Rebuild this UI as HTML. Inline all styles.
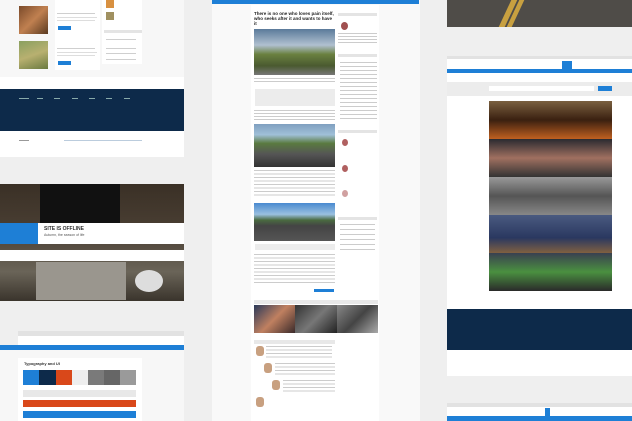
<!DOCTYPE html>
<html><head><meta charset="utf-8"><style>
*{margin:0;padding:0;box-sizing:border-box}
body{width:632px;height:421px;background:#efefef;position:relative;overflow:hidden;font-family:"Liberation Sans",sans-serif}
.a{position:absolute}
.w{background:#fff}
.ln{position:absolute;height:1px;background:#cfcfcf}
</style></head><body>
<!-- LEFT COLUMN -->
<div class="a" style="left:0;top:0;width:184px;height:157px;background:#f7f7f7"></div>
<div class="a w" style="left:55px;top:0;width:45px;height:70px"></div>
<div class="a w" style="left:102px;top:0;width:40px;height:64px"></div>
<div class="a" style="left:19px;top:6px;width:29px;height:28px;background:linear-gradient(135deg,#7a4a2a,#c08050 50%,#5a3a20)"></div>
<div class="a" style="left:19px;top:41px;width:29px;height:28px;background:linear-gradient(160deg,#8aa060,#b8b070 50%,#6a7a40)"></div>
<div class="ln" style="left:57px;top:13px;width:38px"></div><div class="ln" style="left:57px;top:17px;width:40px;background:#ddd"></div><div class="ln" style="left:57px;top:20px;width:38px;background:#ddd"></div>
<div class="a" style="left:58px;top:26px;width:13px;height:4px;background:#1e7fd6"></div>
<div class="ln" style="left:57px;top:48px;width:38px"></div><div class="ln" style="left:57px;top:52px;width:40px;background:#ddd"></div><div class="ln" style="left:57px;top:55px;width:38px;background:#ddd"></div>
<div class="a" style="left:58px;top:61px;width:13px;height:4px;background:#1e7fd6"></div>
<div class="a" style="left:106px;top:0;width:8px;height:8px;background:#d89040"></div>
<div class="a" style="left:106px;top:12px;width:8px;height:8px;background:#a09060"></div>
<div class="a" style="left:104px;top:30px;width:38px;height:3px;background:#e4e4e4"></div>
<div class="ln" style="left:106px;top:39px;width:30px"></div><div class="ln" style="left:106px;top:48px;width:30px"></div><div class="ln" style="left:106px;top:53px;width:30px"></div><div class="ln" style="left:106px;top:59px;width:30px"></div>
<div class="a w" style="left:0;top:77px;width:184px;height:12px"></div>
<div class="a" style="left:0;top:89px;width:184px;height:42px;background:#0d2a4a"></div>
<div class="ln" style="left:19px;top:98px;width:10px;background:#8aa"></div>
<div class="ln" style="left:37px;top:98px;width:6px;background:#8aa"></div><div class="ln" style="left:54px;top:98px;width:6px;background:#8aa"></div><div class="ln" style="left:72px;top:98px;width:6px;background:#8aa"></div><div class="ln" style="left:89px;top:98px;width:6px;background:#8aa"></div><div class="ln" style="left:106px;top:98px;width:6px;background:#8aa"></div><div class="ln" style="left:124px;top:98px;width:6px;background:#8aa"></div>
<div class="a w" style="left:0;top:131px;width:184px;height:26px"></div>
<div class="ln" style="left:19px;top:140px;width:10px;background:#999"></div>
<div class="ln" style="left:64px;top:140px;width:78px;background:#bcd"></div>
<div class="a" style="left:0;top:184px;width:184px;height:117px;background:linear-gradient(180deg,#3a3026 0%,#4a3f33 40%,#6a6458 75%,#3a342c 100%)"></div>
<div class="a" style="left:40px;top:184px;width:80px;height:45px;background:#111"></div>
<div class="a" style="left:36px;top:262px;width:90px;height:38px;background:#9a968e"></div>
<div class="a" style="left:135px;top:270px;width:28px;height:22px;border-radius:50%;background:#ddd"></div>
<div class="a" style="left:0;top:223px;width:38px;height:21px;background:#1e7fd6"></div>
<div class="a w" style="left:38px;top:223px;width:146px;height:21px"></div>
<div class="a" style="left:44px;top:226px;font-size:5px;font-weight:bold;color:#333">SITE IS OFFLINE</div>
<div class="a" style="left:44px;top:233px;font-size:3.5px;color:#555">Autumn, the season of life</div>
<div class="a w" style="left:0;top:250px;width:184px;height:11px"></div>
<div class="a" style="left:18px;top:331px;width:166px;height:5px;background:#e2e2e2"></div>
<div class="a w" style="left:18px;top:336px;width:166px;height:9px"></div>
<div class="a" style="left:0;top:345px;width:184px;height:5px;background:#1e7fd6"></div>
<div class="a" style="left:0;top:350px;width:184px;height:71px;background:#f7f7f7"></div>
<div class="a w" style="left:18px;top:358px;width:124px;height:63px"></div>
<div class="a" style="left:24px;top:361px;font-size:4px;font-weight:bold;color:#333">Typography and UI</div>
<div class="a" style="left:23px;top:370px;width:16px;height:15px;background:#1e7fd6"></div>
<div class="a" style="left:39px;top:370px;width:17px;height:15px;background:#0d2a4a"></div>
<div class="a" style="left:56px;top:370px;width:16px;height:15px;background:#d9481a"></div>
<div class="a" style="left:72px;top:370px;width:16px;height:15px;background:#eee"></div>
<div class="a" style="left:88px;top:370px;width:16px;height:15px;background:#7a7a7a"></div>
<div class="a" style="left:104px;top:370px;width:16px;height:15px;background:#666"></div>
<div class="a" style="left:120px;top:370px;width:16px;height:15px;background:#9a9a9a"></div>
<div class="a" style="left:23px;top:390px;width:113px;height:7px;background:#e8e8e8"></div>
<div class="a" style="left:23px;top:400px;width:113px;height:7px;background:#d9481a"></div>
<div class="a" style="left:23px;top:411px;width:113px;height:7px;background:#1e7fd6"></div>
<!-- MIDDLE -->
<div class="a" style="left:212px;top:0;width:208px;height:421px;background:#f9f9f9"></div>
<div class="a w" style="left:251px;top:5px;width:128px;height:416px"></div>
<div class="a" style="left:212px;top:0;width:207px;height:4px;background:#1e7fd6"></div>
<div class="a" style="left:254px;top:11px;font-size:4.5px;font-weight:bold;color:#222;line-height:5px;width:82px">There is no one who loves pain itself, who seeks after it and wants to have it</div>
<div class="a" style="left:254px;top:29px;width:81px;height:46px;background:linear-gradient(180deg,#5a7a9a,#b0c0d0 35%,#6a8040 55%,#4a5a30 80%,#777)"></div>
<div class="a" style="left:254px;top:78px;width:81px;height:6px;background:repeating-linear-gradient(180deg,#ccc 0 1px,#fff 1px 3px)"></div>
<div class="a" style="left:255px;top:89px;width:80px;height:17px;background:#ececec"></div>
<div class="a" style="left:254px;top:110px;width:81px;height:10px;background:repeating-linear-gradient(180deg,#ccc 0 1px,#fff 1px 3px)"></div>
<div class="a" style="left:254px;top:124px;width:81px;height:43px;background:linear-gradient(180deg,#80a0c0,#a0c0d8 25%,#5a7a40 45%,#555 70%,#333)"></div>
<div class="a" style="left:254px;top:170px;width:81px;height:28px;background:repeating-linear-gradient(180deg,#ccc 0 1px,#fff 1px 3.5px)"></div>
<div class="a" style="left:254px;top:203px;width:81px;height:38px;background:linear-gradient(180deg,#4a8ad0,#9ac0e0 30%,#4a6a40 45%,#444 60%,#555)"></div>
<div class="a" style="left:255px;top:244px;width:80px;height:6px;background:#ececec"></div>
<div class="a" style="left:254px;top:254px;width:81px;height:30px;background:repeating-linear-gradient(180deg,#ccc 0 1px,#fff 1px 3.5px)"></div>
<div class="a" style="left:314px;top:289px;width:20px;height:3px;background:#1e7fd6"></div>
<div class="a" style="left:254px;top:300px;width:124px;height:4px;background:#e8e8e8"></div>
<div class="a" style="left:254px;top:305px;width:41px;height:28px;background:linear-gradient(135deg,#2a3a5a,#c08060 50%,#3a2a2a)"></div>
<div class="a" style="left:295px;top:305px;width:42px;height:28px;background:linear-gradient(135deg,#333,#777 50%,#222)"></div>
<div class="a" style="left:337px;top:305px;width:41px;height:28px;background:linear-gradient(135deg,#888,#444 50%,#aaa)"></div>
<div class="a" style="left:254px;top:340px;width:81px;height:4px;background:#e8e8e8"></div>
<div class="a" style="left:256px;top:346px;width:8px;height:10px;background:#c8a080;border-radius:3px"></div>
<div class="a" style="left:264px;top:363px;width:8px;height:10px;background:#c8a080;border-radius:3px"></div>
<div class="a" style="left:272px;top:380px;width:8px;height:10px;background:#c8a080;border-radius:3px"></div>
<div class="a" style="left:256px;top:397px;width:8px;height:10px;background:#c8a080;border-radius:3px"></div>
<div class="a" style="left:266px;top:346px;width:66px;height:12px;background:repeating-linear-gradient(180deg,#ccc 0 1px,#fff 1px 3.5px)"></div>
<div class="a" style="left:275px;top:363px;width:60px;height:12px;background:repeating-linear-gradient(180deg,#ccc 0 1px,#fff 1px 3.5px)"></div>
<div class="a" style="left:283px;top:380px;width:52px;height:12px;background:repeating-linear-gradient(180deg,#ccc 0 1px,#fff 1px 3.5px)"></div>
<!-- sidebar middle -->
<div class="a" style="left:338px;top:13px;width:39px;height:3px;background:#e4e4e4"></div>
<div class="a" style="left:341px;top:22px;width:7px;height:8px;border-radius:50%;background:#a05050"></div>
<div class="a" style="left:338px;top:33px;width:39px;height:10px;background:repeating-linear-gradient(180deg,#ccc 0 1px,#fff 1px 3px)"></div>
<div class="a" style="left:338px;top:54px;width:39px;height:3px;background:#e4e4e4"></div>
<div class="a" style="left:340px;top:62px;width:37px;height:60px;background:repeating-linear-gradient(180deg,#ccc 0 1px,#fff 1px 4px)"></div>
<div class="a" style="left:338px;top:130px;width:39px;height:3px;background:#e4e4e4"></div>
<div class="a" style="left:342px;top:139px;width:6px;height:7px;border-radius:50%;background:#b06060"></div>
<div class="a" style="left:342px;top:165px;width:6px;height:7px;border-radius:50%;background:#b06060"></div>
<div class="a" style="left:342px;top:190px;width:6px;height:7px;border-radius:50%;background:#d0a0a0"></div>
<div class="a" style="left:338px;top:217px;width:39px;height:3px;background:#e4e4e4"></div>
<div class="a" style="left:340px;top:224px;width:35px;height:30px;background:repeating-linear-gradient(180deg,#ccc 0 1px,#fff 1px 5px)"></div>
<!-- RIGHT -->
<div class="a" style="left:447px;top:0;width:185px;height:27px;background:#4f4c48"></div>
<div class="a" style="left:505px;top:0;width:6px;height:27px;background:#c8a040;transform:skewX(-25deg)"></div>
<div class="a" style="left:513px;top:0;width:5px;height:27px;background:#c8a040;transform:skewX(-25deg)"></div>
<div class="a" style="left:447px;top:56px;width:185px;height:3px;background:#e2e2e2"></div>
<div class="a w" style="left:447px;top:59px;width:185px;height:10px"></div>
<div class="a" style="left:562px;top:61px;width:10px;height:9px;background:#1e7fd6"></div>
<div class="a" style="left:447px;top:69px;width:185px;height:4px;background:#1e7fd6"></div>
<div class="a w" style="left:447px;top:73px;width:185px;height:236px"></div>
<div class="a" style="left:447px;top:82px;width:185px;height:14px;background:#ececec"></div>
<div class="a w" style="left:489px;top:86px;width:105px;height:5px"></div>
<div class="a" style="left:598px;top:86px;width:14px;height:5px;background:#1e7fd6"></div>
<div class="a" style="left:489px;top:101px;width:123px;height:38px;background:linear-gradient(180deg,#7a6040,#3a2010 50%,#c06020)"></div>
<div class="a" style="left:489px;top:139px;width:123px;height:38px;background:linear-gradient(180deg,#2a2a30,#a07060 50%,#333)"></div>
<div class="a" style="left:489px;top:177px;width:123px;height:38px;background:linear-gradient(180deg,#999,#555 50%,#888)"></div>
<div class="a" style="left:489px;top:215px;width:123px;height:38px;background:linear-gradient(180deg,#4a5a80,#2a3860 60%,#806040)"></div>
<div class="a" style="left:489px;top:253px;width:123px;height:38px;background:linear-gradient(180deg,#3a4050,#4a9040 50%,#2a2a2a)"></div>
<div class="a" style="left:447px;top:309px;width:185px;height:41px;background:#0d2a4a"></div>
<div class="a w" style="left:447px;top:350px;width:185px;height:26px"></div>
<div class="a" style="left:447px;top:403px;width:185px;height:4px;background:#e2e2e2"></div>
<div class="a w" style="left:447px;top:407px;width:185px;height:9px"></div>
<div class="a" style="left:545px;top:408px;width:5px;height:8px;background:#1e7fd6"></div>
<div class="a" style="left:447px;top:416px;width:185px;height:5px;background:#1e7fd6"></div>
</body></html>
